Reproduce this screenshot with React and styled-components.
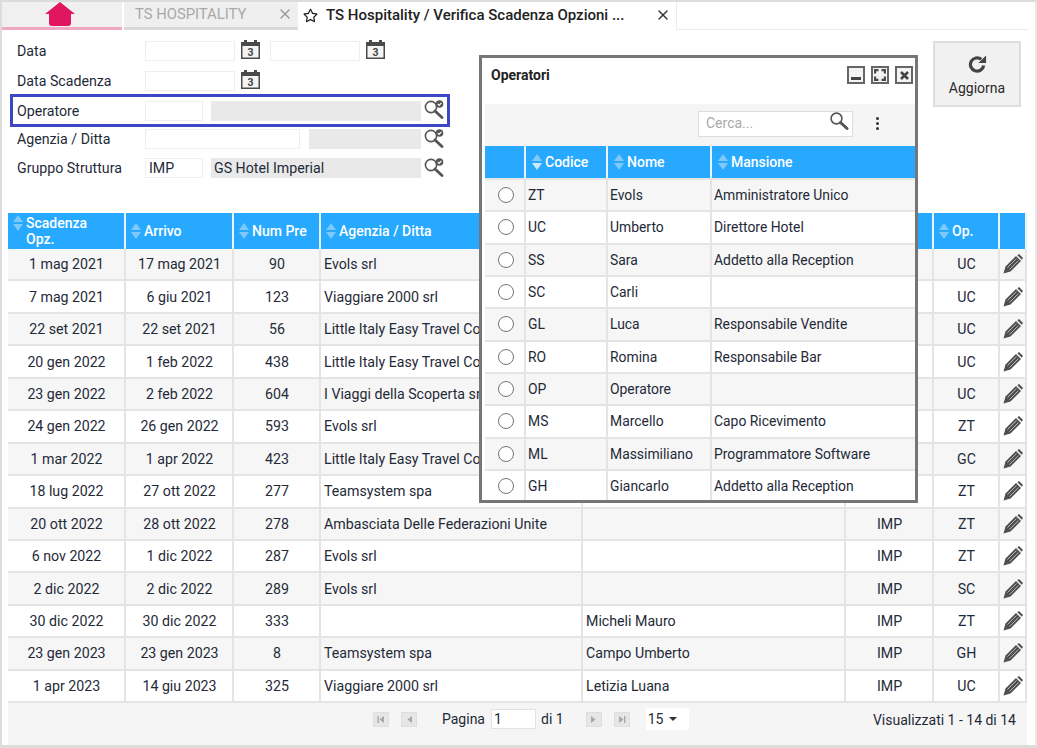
import React from 'react';
import styled, { createGlobalStyle } from 'styled-components';
import { FiX } from 'react-icons/fi';
import { FaRegStar } from 'react-icons/fa';

const GlobalStyle = createGlobalStyle`
  html, body {
    margin: 0;
    padding: 0;
    background: #fff;
  }
  body {
    font-family: Roboto, "Liberation Sans", Arial, sans-serif;
    font-size: 14px;
    color: #1f2a38;
  }
`;

// Table data
const columns = [
  { key: 'scad', title: 'Scadenza Opz.', narrow: true },
  { key: 'arrivo', title: 'Arrivo' },
  { key: 'num', title: 'Num Pre' },
  { key: 'agenzia', title: 'Agenzia / Ditta' },
  { key: 'ref', title: '' },
  { key: 'gruppo', title: '' },
  { key: 'op', title: 'Op.' },
  { key: 'edit', title: '' },
];

const rows = [
  ['1 mag 2021', '17 mag 2021', '90', 'Evols srl', '', 'IMP', 'UC'],
  ['7 mag 2021', '6 giu 2021', '123', 'Viaggiare 2000 srl', '', 'IMP', 'UC'],
  ['22 set 2021', '22 set 2021', '56', 'Little Italy Easy Travel Co', '', 'IMP', 'UC'],
  ['20 gen 2022', '1 feb 2022', '438', 'Little Italy Easy Travel Co', '', 'IMP', 'UC'],
  ['23 gen 2022', '2 feb 2022', '604', 'I Viaggi della Scoperta sr', '', 'IMP', 'UC'],
  ['24 gen 2022', '26 gen 2022', '593', 'Evols srl', '', 'IMP', 'ZT'],
  ['1 mar 2022', '1 apr 2022', '423', 'Little Italy Easy Travel Co', '', 'IMP', 'GC'],
  ['18 lug 2022', '27 ott 2022', '277', 'Teamsystem spa', '', 'IMP', 'ZT'],
  ['20 ott 2022', '28 ott 2022', '278', 'Ambasciata Delle Federazioni Unite', '', 'IMP', 'ZT'],
  ['6 nov 2022', '1 dic 2022', '287', 'Evols srl', '', 'IMP', 'ZT'],
  ['2 dic 2022', '2 dic 2022', '289', 'Evols srl', '', 'IMP', 'SC'],
  ['30 dic 2022', '30 dic 2022', '333', '', 'Micheli Mauro', 'IMP', 'ZT'],
  ['23 gen 2023', '23 gen 2023', '8', 'Teamsystem spa', 'Campo Umberto', 'IMP', 'GH'],
  ['1 apr 2023', '14 giu 2023', '325', 'Viaggiare 2000 srl', 'Letizia Luana', 'IMP', 'UC'],
];

const operatori = [
  ['ZT', 'Evols', 'Amministratore Unico'],
  ['UC', 'Umberto', 'Direttore Hotel'],
  ['SS', 'Sara', 'Addetto alla Reception'],
  ['SC', 'Carli', ''],
  ['GL', 'Luca', 'Responsabile Vendite'],
  ['RO', 'Romina', 'Responsabile Bar'],
  ['OP', 'Operatore', ''],
  ['MS', 'Marcello', 'Capo Ricevimento'],
  ['ML', 'Massimiliano', 'Programmatore Software'],
  ['GH', 'Giancarlo', 'Addetto alla Reception'],
];

const HomeIcon = () => (
  <svg width="30" height="24" viewBox="0 0 30 24">
    <path d="M15 0 L30 12 L26 12 L26 21 Q26 24 23 24 L7 24 Q4 24 4 21 L4 12 L0 12 Z" fill="#e0175f" />
  </svg>
);

const CalendarIcon = () => (
  <svg width="19" height="19" viewBox="0 0 19 19">
    <rect x="0" y="2" width="19" height="17" fill="#4a4a4a" />
    <rect x="3" y="0" width="3" height="3" fill="#4a4a4a" />
    <rect x="13" y="0" width="3" height="3" fill="#4a4a4a" />
    <rect x="1.5" y="6" width="16" height="11.5" fill="#f4f4f4" />
    <text x="9.5" y="16" fontSize="10.5" fontWeight="700" textAnchor="middle" fill="#444" fontFamily="Roboto, sans-serif">3</text>
  </svg>
);

const LookupIcon = () => (
  <svg width="20" height="20" viewBox="0 0 20 20">
    <circle cx="7" cy="8" r="5.6" fill="none" stroke="#555" strokeWidth="1.6" />
    <path d="M11 12 L18 18.5" stroke="#555" strokeWidth="2.8" strokeLinecap="round" />
    <circle cx="15.5" cy="5" r="3.8" fill="#555" />
    <path d="M13.8 5 L15.2 6.4 L17.4 3.8" fill="none" stroke="#fff" strokeWidth="1.1" />
  </svg>
);

const PencilIcon = () => (
  <svg width="20" height="20" viewBox="0 0 20 20">
    <path d="M0.5 19.5 L2.5 12.5 L13 2 L18 7 L7.5 17.5 Z" fill="#4f4f4f" />
    <path d="M14.3 1.2 L16 0 L20 4 L18.8 5.7 Z" fill="#4f4f4f" />
    <path d="M4.5 13.5 L13.5 4.5 M6.5 15.5 L15.5 6.5" stroke="#cfcfcf" strokeWidth="0.8" />
  </svg>
);

const RefreshIcon = () => (
  <svg width="19" height="19" viewBox="0 0 20 20">
    <path d="M16.5 11 A7 7 0 1 1 14 4.6" fill="none" stroke="#454545" strokeWidth="3.4" />
    <path d="M11 8.5 L19 8.5 L19 0.5 Z" fill="#454545" />
  </svg>
);

const SearchIcon = () => (
  <svg width="20" height="20" viewBox="0 0 20 20">
    <circle cx="7.5" cy="7.5" r="5.4" fill="none" stroke="#555" strokeWidth="1.6" />
    <path d="M11.5 11.5 L18 17.5" stroke="#555" strokeWidth="3" strokeLinecap="round" />
  </svg>
);

const PagerGlyph = ({ dir, bar }) => (
  <svg width="9" height="9" viewBox="0 0 9 9">
    <path d={dir === 'left' ? 'M7 1 L7 8 L2.5 4.5 Z' : 'M2 1 L2 8 L6.5 4.5 Z'} fill="#a8a8a8" />
    {bar && <rect x={dir === 'left' ? 0.5 : 7} y="1" width="1.4" height="7" fill="#a8a8a8" />}
  </svg>
);

const SortArrows = ({ active, top }) => (
  <SortIcon width="10" height="16" viewBox="0 0 10 16" $top={top}>
    <path d="M5 0 L10 7 L0 7 Z" fill="#7fc8f8" />
    <path d="M5 16 L10 9 L0 9 Z" fill={active ? '#cfe9fb' : '#7fc8f8'} />
  </SortIcon>
);

const App = () => {
  return (
    <Page>
      <GlobalStyle />
      <TabBar>
        <HomeTab><HomeIcon /></HomeTab>
        <MenuTab>
          <span>TS HOSPITALITY</span>
          <TabClose $muted><FiX /></TabClose>
        </MenuTab>
        <ActiveTab>
          <FaRegStar size={15} color="#222" />
          <ActiveTitle>TS Hospitality / Verifica Scadenza Opzioni ...</ActiveTitle>
          <TabClose><FiX /></TabClose>
        </ActiveTab>
        <TabFiller />
      </TabBar>

      <TopArea>
        <Form>
          <FormRow>
            <Label>Data</Label>
            <Input $w={90} />
            <CalSlot><CalendarIcon /></CalSlot>
            <Input $w={90} />
            <CalSlot><CalendarIcon /></CalSlot>
          </FormRow>
          <FormRow $mt={2}>
            <Label>Data Scadenza</Label>
            <Input $w={90} />
            <CalSlot><CalendarIcon /></CalSlot>
          </FormRow>
          <FormRow $highlight $mt={-1}>
            <Label>Operatore</Label>
            <Input $w={58} />
            <ReadOnly $w={210} $gap={8} />
            <LookupSlot><LookupIcon /></LookupSlot>
          </FormRow>
          <FormRow $mt={-2}>
            <Label>Agenzia / Ditta</Label>
            <Input $w={155} />
            <ReadOnly $w={112} $gap={9} />
            <LookupSlot><LookupIcon /></LookupSlot>
          </FormRow>
          <FormRow $mt={1}>
            <Label>Gruppo Struttura</Label>
            <Input $w={58}>IMP</Input>
            <ReadOnly $w={210} $gap={8}>GS Hotel Imperial</ReadOnly>
            <LookupSlot><LookupIcon /></LookupSlot>
          </FormRow>
        </Form>
        <RefreshButton>
          <RefreshIcon />
          <span>Aggiorna</span>
        </RefreshButton>
      </TopArea>

      <Table>
        <HeadRow>
          {columns.map((col) => (
            <HeadCell key={col.key}>
              {col.title && <SortArrows top={col.narrow} />}
              {col.title && <HeadTitle $narrow={col.narrow}>{col.title}</HeadTitle>}
            </HeadCell>
          ))}
        </HeadRow>
        {rows.map((row, index) => (
          <BodyRow key={index} $odd={index % 2 === 0}>
            <Cell $center>{row[0]}</Cell>
            <Cell $center>{row[1]}</Cell>
            <Cell $center>{row[2]}</Cell>
            <Cell>{row[3]}</Cell>
            <Cell>{row[4]}</Cell>
            <Cell $center>{row[5]}</Cell>
            <Cell $center>{row[6]}</Cell>
            <Cell $center><PencilIcon /></Cell>
          </BodyRow>
        ))}
        <Pager>
          <PagerControls>
            <PagerButton><PagerGlyph dir="left" bar /></PagerButton>
            <PagerButton><PagerGlyph dir="left" /></PagerButton>
            <PageLabel>Pagina</PageLabel>
            <PageInput>1</PageInput>
            <span>di 1</span>
            <PagerButton $next><PagerGlyph dir="right" /></PagerButton>
            <PagerButton><PagerGlyph dir="right" bar /></PagerButton>
            <PageSize>15 <Caret /></PageSize>
          </PagerControls>
          <PagerInfo>Visualizzati 1 - 14 di 14</PagerInfo>
        </Pager>
      </Table>

      <Modal>
        <ModalHead>
          <ModalTitle>Operatori</ModalTitle>
          <WindowButtons>
            <WindowButton><MinBar /></WindowButton>
            <WindowButton>
              <svg width="12" height="12" viewBox="0 0 12 12">
                <path d="M1 4.5 V1 H4.5 M7.5 1 H11 V4.5 M11 7.5 V11 H7.5 M4.5 11 H1 V7.5" fill="none" stroke="#4a4a4a" strokeWidth="2.4" />
              </svg>
            </WindowButton>
            <WindowButton>
              <svg width="9" height="9" viewBox="0 0 9 9">
                <path d="M1 1 L8 8 M8 1 L1 8" stroke="#444" strokeWidth="2.6" />
              </svg>
            </WindowButton>
          </WindowButtons>
        </ModalHead>
        <ModalTools>
          <SearchBox>
            <span>Cerca...</span>
            <SearchIcon />
          </SearchBox>
          <MoreDots><i /><i /><i /></MoreDots>
        </ModalTools>
        <ModalHeadRow>
          <ModalHeadCell />
          <ModalHeadCell><SortArrows active /><HeadTitle>Codice</HeadTitle></ModalHeadCell>
          <ModalHeadCell><SortArrows /><HeadTitle>Nome</HeadTitle></ModalHeadCell>
          <ModalHeadCell><SortArrows /><HeadTitle>Mansione</HeadTitle></ModalHeadCell>
        </ModalHeadRow>
        {operatori.map((op, index) => (
          <ModalRow key={op[0]} $odd={index % 2 === 0}>
            <ModalCell $center><Radio /></ModalCell>
            <ModalCell>{op[0]}</ModalCell>
            <ModalCell>{op[1]}</ModalCell>
            <ModalCell>{op[2]}</ModalCell>
          </ModalRow>
        ))}
      </Modal>
    </Page>
  );
};

const Page = styled.div`
  position: relative;
  width: 1037px;
  height: 748px;
  box-sizing: border-box;
  border-top: 2px solid #dcdcdc;
  border-left: 2px solid #dcdcdc;
  border-bottom: 3px solid #dcdcdc;
  border-right: 2px solid #e6e6e6;
  overflow: hidden;
  background: #fff;
`;

const TabBar = styled.div`
  display: flex;
  height: 28px;
`;

const HomeTab = styled.div`
  width: 120px;
  box-sizing: border-box;
  background: #f0f0f0;
  border-bottom: 3px solid #f0a9c2;
  display: flex;
  justify-content: center;
  margin-right: 2px;
  padding-right: 4px;
`;

const MenuTab = styled.div`
  width: 174px;
  box-sizing: border-box;
  background: #efefef;
  border-bottom: 3px solid #dadada;
  display: flex;
  align-items: center;
  padding: 0 5px 2px 11px;
  color: #a9a9a9;
  font-size: 14.8px;
  justify-content: space-between;
`;

const TabClose = styled.span`
  display: flex;
  font-size: 16px;
  color: ${(p) => (p.$muted ? '#9a9a9a' : '#333')};
`;

const ActiveTab = styled.div`
  width: 378px;
  box-sizing: border-box;
  display: flex;
  align-items: center;
  padding: 0 5px 2px 4px;
  border-right: 1px solid #ececec;
  margin-left: 1px;
`;

const ActiveTitle = styled.span`
  flex: 1;
  margin-left: 8px;
  font-size: 15px;
  font-weight: 500;
  color: #222;
  white-space: nowrap;
`;

const TabFiller = styled.div`
  flex: 1;
  border-bottom: 1px solid #ececec;
  margin-right: 6px;
`;

const TopArea = styled.div`
  display: flex;
  justify-content: space-between;
  align-items: flex-start;
  height: 183px;
  box-sizing: border-box;
  padding: 7px 14px 0 8px;
`;

const Form = styled.div`
  display: flex;
  flex-direction: column;
  width: 440px;
`;

const FormRow = styled.div`
  display: flex;
  align-items: center;
  height: ${(p) => (p.$highlight ? '33px' : '28px')};
  margin-top: ${(p) => p.$mt || 0}px;
  box-sizing: border-box;
  padding-left: ${(p) => (p.$highlight ? '4px' : '7px')};
  border: ${(p) => (p.$highlight ? '3px solid #3d46c4' : '0')};
`;

const Label = styled.div`
  width: 128px;
  flex: none;
  font-size: 14.2px;
  color: #1f2a38;
`;

const Input = styled.div`
  width: ${(p) => p.$w}px;
  height: 20px;
  line-height: 19px;
  box-sizing: border-box;
  border: 1px solid #eeeeee;
  background: #fff;
  padding-left: 3px;
  font-size: 14.2px;
`;

const CalSlot = styled.div`
  display: flex;
  margin: 0 10px 4px 6px;
  width: 19px;
`;

const ReadOnly = styled.div`
  width: ${(p) => p.$w}px;
  margin-left: ${(p) => p.$gap}px;
  height: 20px;
  line-height: 20px;
  background: #e9e9e9;
  padding-left: 3px;
  box-sizing: border-box;
  font-size: 14.2px;
`;

const LookupSlot = styled.div`
  display: flex;
  margin: 0 0 3px 3px;
`;

const RefreshButton = styled.div`
  width: 88px;
  height: 66px;
  margin-top: 4px;
  box-sizing: border-box;
  background: #f1f1f1;
  border: 2px solid #dedede;
  display: flex;
  flex-direction: column;
  align-items: center;
  justify-content: center;
  gap: 6px;
  padding-top: 2px;
  font-size: 14px;
  color: #2a2a2a;
`;

const gridCols = '118px 108px 87px 262px 263px 88px 66px 27px';

const Table = styled.div`
  margin-left: 6px;
  width: 1019px;
`;

const HeadRow = styled.div`
  display: grid;
  grid-template-columns: ${gridCols};
  height: 36px;
  background: #26a9ff;
`;

const HeadCell = styled.div`
  display: flex;
  align-items: center;
  box-sizing: border-box;
  border-right: 2px solid #e8f5ff;
  padding-left: 5px;
  color: #fff;
  font-size: 14px;
  font-weight: 500;
  line-height: 16px;
`;

const SortIcon = styled.svg`
  flex: none;
  margin-right: 3px;
  align-self: ${(p) => (p.$top ? 'flex-start' : 'center')};
  margin-top: ${(p) => (p.$top ? '2px' : '0')};
`;

const HeadTitle = styled.span`
  color: #fff;
  max-width: ${(p) => (p.$narrow ? '70px' : 'none')};
`;

const BodyRow = styled.div`
  display: grid;
  grid-template-columns: ${gridCols};
  height: 32.45px;
  box-sizing: border-box;
  border-bottom: 2px solid #e4e4e4;
  background: ${(p) => (p.$odd ? '#f6f6f6' : '#fff')};
`;

const Cell = styled.div`
  display: flex;
  align-items: center;
  justify-content: ${(p) => (p.$center ? 'center' : 'flex-start')};
  box-sizing: border-box;
  border-right: 2px solid #e4e4e4;
  padding: 0 2px 0 3px;
  font-size: 14.2px;
  white-space: nowrap;
  overflow: hidden;
`;

const Pager = styled.div`
  display: flex;
  align-items: flex-start;
  justify-content: space-between;
  height: 42px;
  background: #f5f5f5;
  padding: 5px 11px 0 365px;
  font-size: 14px;
`;

const PagerControls = styled.div`
  display: flex;
  align-items: center;
  height: 22px;
`;

const PagerButton = styled.div`
  width: 16px;
  height: 15px;
  box-sizing: border-box;
  background: #e6e6e6;
  border: 1px solid #dedede;
  display: flex;
  align-items: center;
  justify-content: center;
  margin-left: ${(p) => (p.$next ? '22px' : '0')};
  margin-right: 12px;
`;

const PageLabel = styled.span`
  margin-left: 13px;
`;

const PageInput = styled.div`
  width: 45px;
  height: 20px;
  line-height: 19px;
  box-sizing: border-box;
  background: #fff;
  border: 1px solid #e2e2e2;
  margin: 0 5px 0 6px;
  padding-left: 2px;
`;

const PageSize = styled.div`
  width: 43px;
  height: 22px;
  margin-left: 4px;
  background: #fff;
  display: flex;
  align-items: center;
  gap: 6px;
  padding-left: 2px;
  box-sizing: border-box;
`;

const Caret = styled.i`
  width: 0;
  height: 0;
  border-left: 4px solid transparent;
  border-right: 4px solid transparent;
  border-top: 4px solid #333;
`;

const PagerInfo = styled.div`
  line-height: 24px;
`;

const Modal = styled.div`
  position: absolute;
  left: 477px;
  top: 53px;
  width: 439px;
  height: 448px;
  box-sizing: border-box;
  border: 3px solid #767676;
  padding-left: 3px;
  background: #fff;
  overflow: hidden;
`;

const ModalHead = styled.div`
  display: flex;
  justify-content: space-between;
  align-items: center;
  height: 46px;
  padding: 0 2px 12px 6px;
  box-sizing: border-box;
`;

const ModalTitle = styled.div`
  font-size: 14px;
  font-weight: 700;
  color: #222;
`;

const WindowButtons = styled.div`
  display: flex;
  gap: 6px;
`;

const WindowButton = styled.div`
  width: 18px;
  height: 18px;
  box-sizing: border-box;
  border: 2px solid #666;
  background: #f3f3f3;
  display: flex;
  align-items: center;
  justify-content: center;

  svg {
    flex: none;
  }
`;

const MinBar = styled.i`
  width: 10px;
  height: 3px;
  background: #444;
  margin-top: 7px;
`;

const ModalTools = styled.div`
  display: flex;
  align-items: center;
  justify-content: flex-end;
  height: 42px;
  background: #f5f5f5;
  padding: 0 36px 3px 0;
  box-sizing: border-box;
`;

const SearchBox = styled.div`
  width: 155px;
  height: 26px;
  box-sizing: border-box;
  border: 1px solid #dedede;
  background: #fff;
  display: flex;
  align-items: center;
  justify-content: space-between;
  padding: 0 3px 2px 7px;
  color: #a9a9a9;
  font-size: 14px;

  svg {
    margin-bottom: 3px;
  }
`;

const MoreDots = styled.div`
  display: flex;
  flex-direction: column;
  gap: 2px;
  margin-left: 23px;
  width: 3px;

  i {
    width: 3px;
    height: 3px;
    background: #333;
    border-radius: 50%;
  }
`;

const modalCols = '41px 82px 104px 1fr';

const ModalHeadRow = styled.div`
  display: grid;
  grid-template-columns: ${modalCols};
  height: 32px;
  background: #26a9ff;
`;

const ModalHeadCell = styled.div`
  display: flex;
  align-items: center;
  box-sizing: border-box;
  padding-left: 6px;
  border-right: 2px solid #e8f5ff;
  font-size: 14px;
  font-weight: 500;

  &:last-child {
    border-right: 0;
  }
`;

const ModalRow = styled.div`
  display: grid;
  grid-template-columns: ${modalCols};
  height: 32.33px;
  box-sizing: border-box;
  border-top: 2px solid #e4e4e4;
  background: ${(p) => (p.$odd ? '#f6f6f6' : '#fff')};
`;

const ModalCell = styled.div`
  display: flex;
  align-items: center;
  justify-content: ${(p) => (p.$center ? 'center' : 'flex-start')};
  box-sizing: border-box;
  border-right: 2px solid #e4e4e4;
  padding-left: 2px;
  font-size: 13.9px;
  white-space: nowrap;

  &:last-child {
    border-right: 0;
  }
`;

const Radio = styled.span`
  width: 16px;
  height: 16px;
  box-sizing: border-box;
  border: 1.5px solid #757575;
  border-radius: 50%;
  background: #fff;
`;

export default App;
